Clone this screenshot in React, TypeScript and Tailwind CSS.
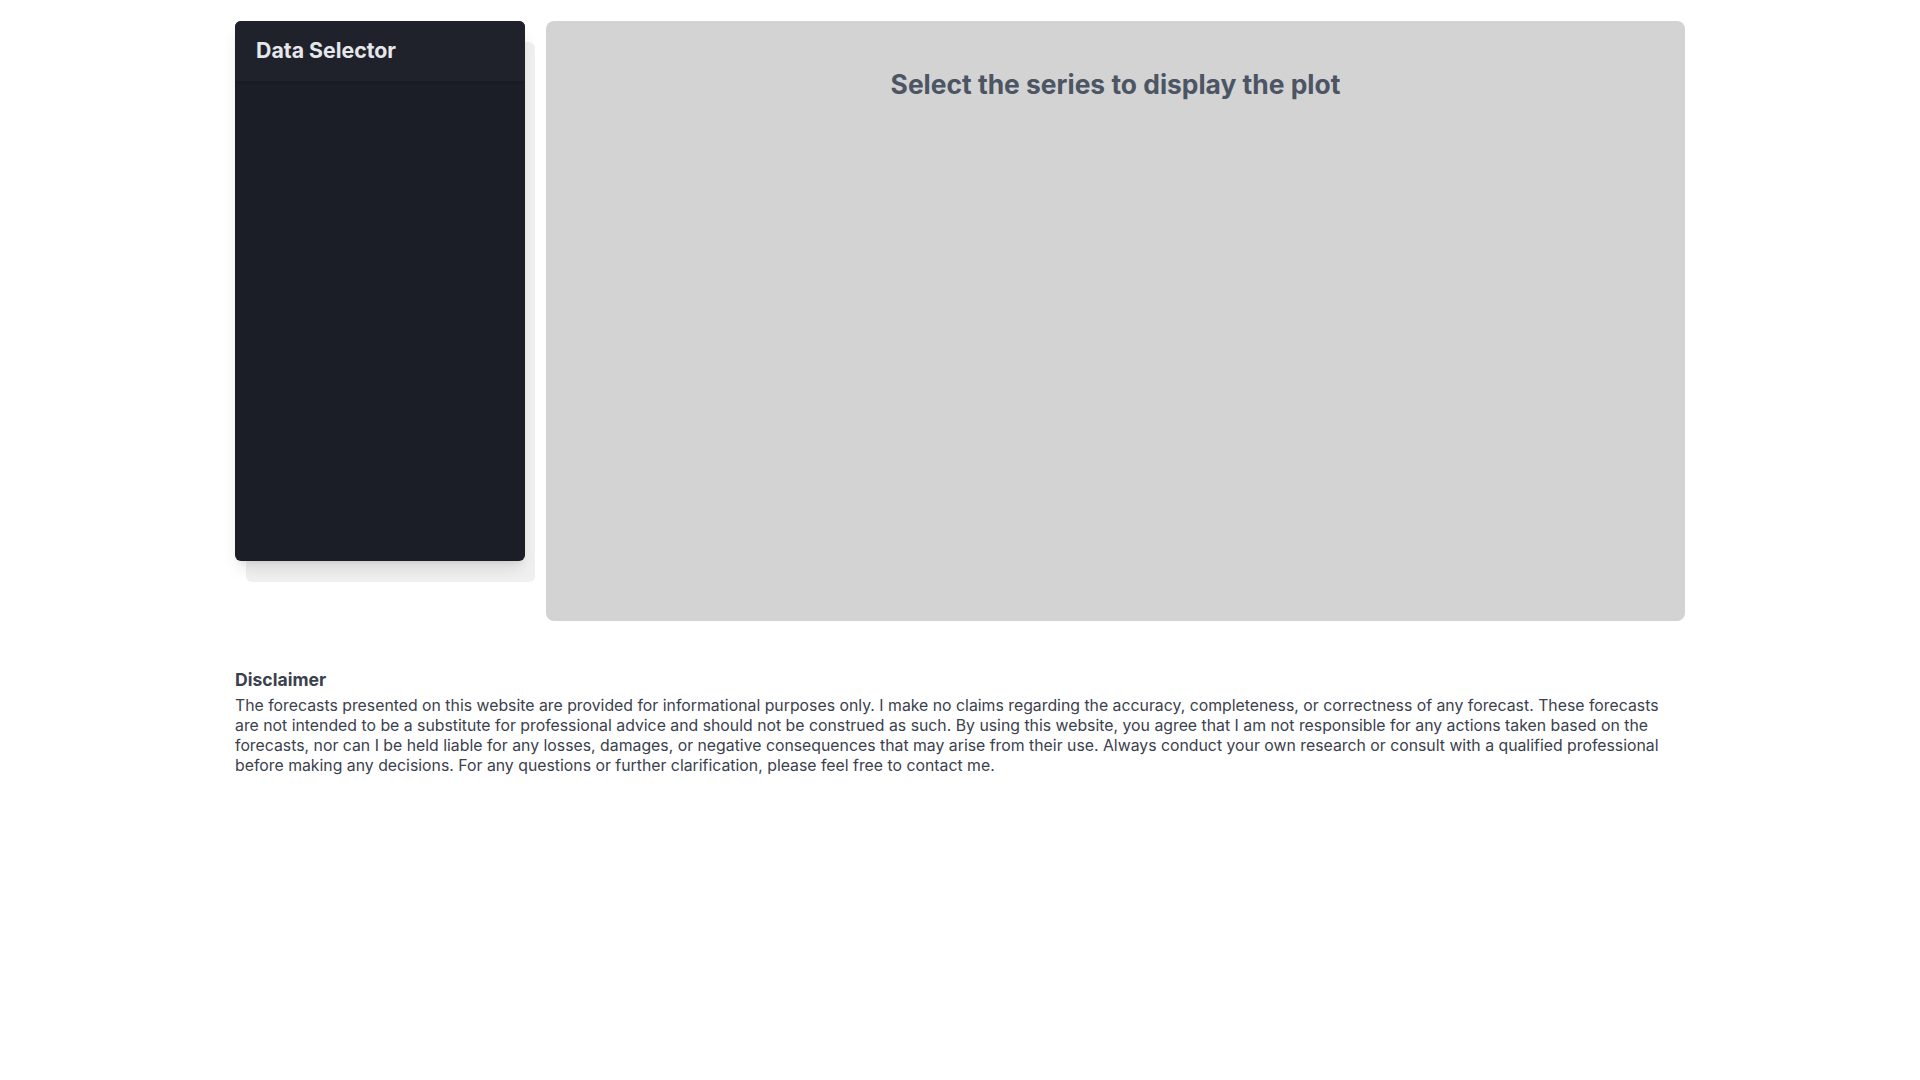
import React from "react";

export default function App() {
  return (
    <div className="min-h-screen bg-white" style={{ fontFamily: "Inter, 'Noto Sans', sans-serif" }}>
      <div className="w-[1450px] mx-auto pt-[21px]">
        <div className="flex gap-[21px] items-start">
          <div className="relative w-[290px] shrink-0">
            <div className="absolute left-[11px] top-[21px] w-[289px] h-[540px] rounded-md bg-[#f0f0f0]" />
            <div className="relative h-[540px] rounded-md bg-[#1b1e26] shadow-lg overflow-hidden">
              <div className="h-[60px] pl-[21px] pr-5 flex items-center bg-[#1f222a] shadow-sm">
                <h2 className="text-[21.3px] font-bold text-[#e5e7eb]">Data Selector</h2>
              </div>
            </div>
          </div>
          <div className="flex-1 h-[600px] rounded-lg bg-[#d3d3d3] pt-[47px] flex justify-center items-start">
            <h1 className="text-[26.4px] leading-8 font-bold text-[#4b5563]">Select the series to display the plot</h1>
          </div>
        </div>
        <div className="mt-[47px] text-[#3b414d]">
          <h3 className="text-[17.6px] font-bold leading-6">Disclaimer</h3>
          <p className="text-[15.82px] leading-5 mt-[4px]">
            The forecasts presented on this website are provided for informational purposes only. I make no claims regarding the accuracy, completeness, or correctness of any forecast. These forecasts are not intended to be a substitute for professional advice and should not be construed as such. By using this website, you agree that I am not responsible for any actions taken based on the forecasts, nor can I be held liable for any losses, damages, or negative consequences that may arise from their use. Always conduct your own research or consult with a qualified professional before making any decisions. For any questions or further clarification, please feel free to contact me.
          </p>
        </div>
      </div>
    </div>
  );
}
